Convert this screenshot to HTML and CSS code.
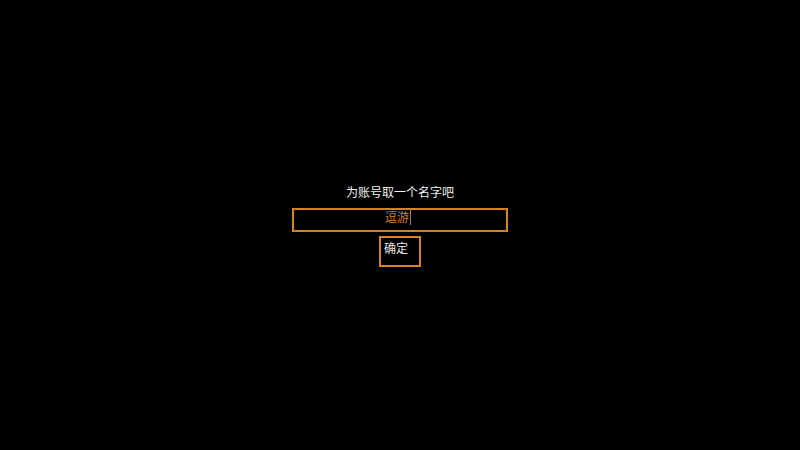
FILE: index.html
```html
<!DOCTYPE html>
<html lang="zh">
<head>
<meta charset="utf-8">
<title>为账号取一个名字吧</title>
<link rel="stylesheet" href="styles.css">
</head>
<body>
<main class="screen">
  <div class="dialog">
    <div class="title">为账号取一个名字吧</div>
    <div class="field"><span class="value">逗游</span><span class="caret"></span></div>
    <button class="ok">确定</button>
  </div>
</main>
</body>
</html>
```
FILE: styles.css
```css
html, body {
  margin: 0;
  padding: 0;
  background: #000;
}
.screen {
  width: 800px;
  height: 450px;
  display: flex;
  align-items: center;
  justify-content: center;
  font-family: "Noto Sans CJK SC", "Noto Sans", sans-serif;
  font-size: 12px;
}
.dialog {
  display: flex;
  flex-direction: column;
  align-items: center;
  padding-top: 1px;
}
.title {
  color: #f0f0f0;
  line-height: 16px;
  height: 16px;
  margin-bottom: 8px;
}
.field {
  box-sizing: border-box;
  width: 216px;
  height: 24px;
  border: 2px solid #d5821f;
  display: flex;
  justify-content: center;
  align-items: flex-start;
  padding-right: 4px;
}
.value {
  color: #d5821f;
  line-height: 13px;
}
.caret {
  width: 1px;
  height: 15px;
  background: #8a8a8a;
  margin-left: 1px;
}
.ok {
  box-sizing: border-box;
  margin-top: 4px;
  width: 42px;
  height: 31px;
  border: 2px solid #d5821f;
  background: #000;
  color: #e6e6e6;
  font-family: inherit;
  font-size: 12px;
  line-height: 16px;
  text-align: left;
  padding: 2px 3px 0;
  display: flex;
  align-items: flex-start;
}
```
